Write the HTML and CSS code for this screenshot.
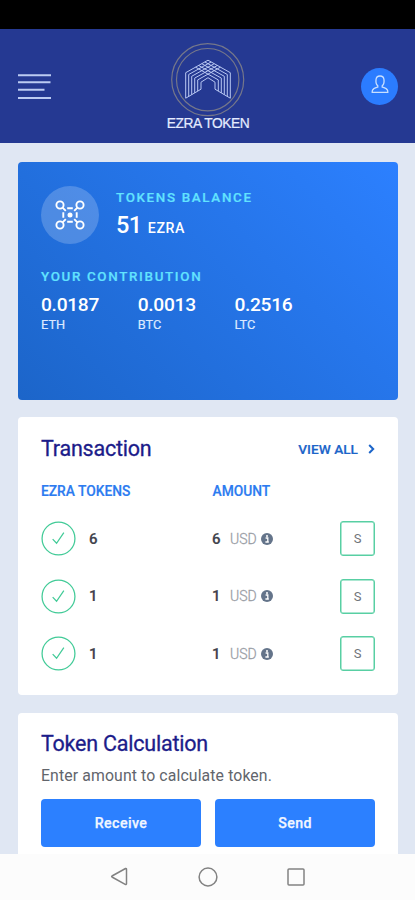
FILE: index.html
```html
<!DOCTYPE html>
<html lang="en">
<head>
<meta charset="utf-8">
<title>Ezra Token</title>
<link rel="stylesheet" href="styles.css">
</head>
<body>
<svg width="0" height="0" class="defs">
  <symbol id="check" viewBox="0 0 36 36"><circle cx="18" cy="18" r="16.9"/><path d="M12 18.7l4 4.2 7.5-11"/></symbol>
  <symbol id="info" viewBox="0 0 12 12"><circle cx="6" cy="6" r="6" fill="#64748a"/><path d="M4.6 5h2.2v3.7M4.4 9h3.4" fill="none" stroke="#fff" stroke-width="1.3"/><circle cx="6" cy="2.9" r="1" fill="#fff"/></symbol>
</svg>
<div class="status"></div>
<header class="top">
  <svg class="menu" width="33" height="28" viewBox="0 0 33 28"><path d="M0 2.200h33M0 9.200h32.500M0 16.700h26.500M0 25h33"/></svg>
  <div class="brand">
    <svg width="76" height="74" viewBox="170 43.500 76 74" fill="none">
      <g stroke="#75778a" stroke-width="1.200"><circle cx="207.700" cy="80.200" r="36"/><circle cx="207.700" cy="80.200" r="31.200"/></g>
      <g stroke="#b9c8f3" stroke-width="1">
        <path d="M185.700 98.700V73.200L208 60.700L230.300 73.200V98.700"/>
        <path d="M188.700 97V75L211.100 62.500M204.900 62.500L227.300 75V97"/>
        <path d="M191.700 95.200V76.800L214.200 64.200M201.800 64.200L224.300 76.800V95.200"/>
        <path d="M194.700 93.400V78.600L217.300 66M198.700 66L221.300 78.600V93.400"/>
        <path d="M197.700 91.600V80.400L220.400 67.700M195.600 67.700L218.300 80.400V91.600"/>
        <path d="M185.700 98.700L201 89.700V82.700L208 78.200L215 82.700V89.700L230.300 98.700"/>
      </g>
    </svg>
    <div class="brand-name">EZRA TOKEN</div>
  </div>
  <div class="avatar">
    <svg width="18" height="19" viewBox="0 0 18 19"><path d="M6.800 10.800C4.900 9.500 4.800 7 5 4.800 5.200 2.300 6.700 1 9 1s3.800 1.300 4 3.800c.2 2.200.1 4.700-1.800 6v1.300c2.300.7 4.600 1.300 5.300 3.100.2.600.3 1.300.3 2.100H1.200c0-.8.1-1.500.3-2.100.7-1.800 3-2.400 5.300-3.100z"/></svg>
  </div>
</header>
<main>
  <section class="balance">
    <div class="balance-head">
      <div class="token-icon">
        <svg width="30" height="30" viewBox="0 0 30 30"><circle cx="5" cy="5" r="3.600"/><circle cx="25" cy="5" r="3.600"/><circle cx="5" cy="25" r="3.600"/><circle cx="25" cy="25" r="3.600"/><path d="M7.600 7.600l3.200 3.200M22.400 7.600l-3.200 3.200M7.600 22.400l3.200-3.200M22.400 22.400l-3.200-3.200M12.200 8.300h5.600M12.200 21.700h5.600M8.300 12.200v5.600M21.700 12.200v5.600"/><circle cx="15" cy="15" r="2.500" class="dot"/></svg>
      </div>
      <div>
        <h6 class="label">TOKENS BALANCE</h6>
        <div class="total">51 <small>EZRA</small></div>
      </div>
    </div>
    <h6 class="label contribution">YOUR CONTRIBUTION</h6>
    <div class="coins">
      <div><b>0.0187</b><span>ETH</span></div>
      <div><b>0.0013</b><span>BTC</span></div>
      <div><b>0.2516</b><span>LTC</span></div>
    </div>
  </section>
  <section class="card transactions">
    <div class="card-head"><h4>Transaction</h4><a>VIEW ALL<svg width="7" height="10" viewBox="0 0 7 10"><path d="M1.200 1l4 4-4 4"/></svg></a></div>
    <div class="row columns"><span class="ez">EZRA TOKENS</span><span>AMOUNT</span></div>
    <div class="row"><svg class="check"><use href="#check"/></svg><b class="qty">6</b><b class="amt">6</b><span class="usd">USD</span><svg class="info"><use href="#info"/></svg><span class="tag">S</span></div>
    <div class="row"><svg class="check"><use href="#check"/></svg><b class="qty">1</b><b class="amt">1</b><span class="usd">USD</span><svg class="info"><use href="#info"/></svg><span class="tag">S</span></div>
    <div class="row"><svg class="check"><use href="#check"/></svg><b class="qty">1</b><b class="amt">1</b><span class="usd">USD</span><svg class="info"><use href="#info"/></svg><span class="tag">S</span></div>
  </section>
  <section class="card calc">
    <h4>Token Calculation</h4>
    <p>Enter amount to calculate token.</p>
    <div class="buttons"><button>Receive</button><button>Send</button></div>
  </section>
</main>
<nav class="system">
  <svg width="18" height="20" viewBox="0 0 18 20"><path d="M15.500 1.500Q16.500 1.200 16.500 2.500V16.500Q16.500 18 15.200 17.300L2 10Q1.300 9.500 2 9z"/></svg>
  <svg width="20" height="20" viewBox="0 0 20 20"><circle cx="10" cy="10" r="8.900"/></svg>
  <svg width="18" height="18" viewBox="0 0 18 18"><rect x="1" y="1" width="16" height="16" rx="1"/></svg>
</nav>
</body>
</html>
```
FILE: styles.css
```css
* { box-sizing: border-box; }
body {
  margin: 0;
  width: 415px;
  height: 900px;
  overflow: hidden;
  display: flex;
  flex-direction: column;
  font-family: Roboto, sans-serif;
  background: #e0e7f3;
}
h4, h6, p { margin: 0; }
svg { display: block; flex: none; }
.defs { position: absolute; }
.status { height: 29px; background: #000; flex: none; }
.top {
  height: 114px;
  flex: none;
  background: #253992;
  padding: 0 17px 0 18px;
  display: grid;
  grid-template-columns: 1fr auto 1fr;
}
.menu { margin-top: 44px; fill: none; stroke: #bccbf2; stroke-width: 2; }
.brand { padding-top: 14px; width: 84px; display: flex; flex-direction: column; align-items: center; }
.brand-name {
  font: 13.8px/14px "Liberation Sans", sans-serif;
  letter-spacing: -0.45px;
  color: #e4ebff;
  -webkit-text-stroke: .2px;
  white-space: nowrap;
}
.avatar {
  justify-self: end;
  margin-top: 39px;
  width: 37px;
  height: 37px;
  border-radius: 50%;
  background: #2b7cff;
  display: flex;
  align-items: center;
  justify-content: center;
}
.avatar svg { fill: none; stroke: #c9e0ff; stroke-width: 1.3; margin-top: -4px; }
main { flex: 1; min-height: 0; overflow: hidden; padding: 19px 17px 0 18px; }
.balance {
  height: 238px;
  border-radius: 4px;
  padding: 24px 23px;
  background: linear-gradient(45deg, #1c65c9 0%, #2c80ff 100%);
  color: #fff;
}
.balance-head { display: flex; gap: 17px; height: 58px; }
.token-icon {
  width: 58px;
  height: 58px;
  border-radius: 50%;
  background: rgba(255, 255, 255, .2);
  display: flex;
  align-items: center;
  justify-content: center;
}
.token-icon svg { fill: none; stroke: #fff; stroke-width: 1.9; }
.token-icon .dot { fill: #fff; stroke: none; }
.label { font-size: 13.4px; line-height: 16px; font-weight: 500; letter-spacing: 1.65px; color: #62e3ff; padding-top: 4px; white-space: nowrap; -webkit-text-stroke: .2px; }
.total { font-size: 23.5px; line-height: 28px; font-weight: 500; margin-top: 5px; letter-spacing: -.6px; }
.total small { font-size: 14.2px; letter-spacing: .6px; margin-left: 1px; }
.contribution { margin-top: 21px; }
.coins { display: flex; margin-top: 8px; }
.coins div { width: 96.7px; }
.coins b { display: block; font-size: 19.2px; font-weight: 500; line-height: 24px; letter-spacing: -.3px; }
.coins span { display: block; font-size: 12.8px; line-height: 15px; color: #dce9ff; -webkit-text-stroke: .2px; }
.card { background: #fff; border-radius: 4px; padding: 0 23px; }
.transactions { margin-top: 17px; height: 278px; }
.calc { margin-top: 18px; height: 200px; padding-top: 17px; }
h4 { font-size: 21.5px; line-height: 28px; font-weight: 400; letter-spacing: -.22px; color: #1c1c8a; -webkit-text-stroke: .3px; }
.card-head { display: flex; justify-content: space-between; padding-top: 18px; }
.card-head a { display: flex; align-items: center; gap: 10px; font-size: 13.7px; font-weight: 500; color: #1c65c9; line-height: 28px; -webkit-text-stroke: .2px; }
.card-head svg { fill: none; stroke: #1c65c9; stroke-width: 2; }
.row { display: flex; align-items: center; height: 57.5px; }
.columns { height: 20px; margin: 18px 0 9px; font-size: 13.8px; font-weight: 500; color: #2c7bf0; -webkit-text-stroke: .2px; }
.ez { width: 171.5px; }
.check { width: 35px; height: 35px; fill: none; stroke: #43cb98; stroke-width: 1.3; }
.row b { font-size: 15px; font-weight: 500; color: #3f424c; -webkit-text-stroke: .2px; }
.qty { margin-left: 13px; width: 123px; }
.amt { width: 18px; }
.usd { width: 31px; font-size: 14px; color: #9a9ea6; font-weight: 300; -webkit-text-stroke: .3px; }
.info { width: 12px; height: 12px; }
.tag {
  margin-left: auto;
  width: 35px;
  height: 35px;
  border: 1px solid #58cfa3;
  box-shadow: inset 0 0 0 .5px #58cfa3;
  border-radius: 3px;
  font-size: 13px;
  line-height: 33px;
  text-align: center;
  color: #70747a;
}
.calc p { font-size: 15.8px; letter-spacing: .12px; line-height: 20px; color: #62656c; margin-top: 8px; white-space: nowrap; }
.buttons { display: flex; gap: 14px; margin-top: 13px; }
button {
  flex: 1;
  height: 48px;
  border: 0;
  border-radius: 4px;
  background: #2c80ff;
  color: #f1f6ff;
  font: 500 14.2px Roboto, sans-serif;
  letter-spacing: .4px;
  -webkit-text-stroke: .25px;
}
.system {
  height: 46px;
  flex: none;
  background: #fcfcfc;
  display: flex;
  align-items: center;
  justify-content: center;
  gap: 69.5px;
}
.system svg { fill: none; stroke: #828282; stroke-width: 1.5; }
```
